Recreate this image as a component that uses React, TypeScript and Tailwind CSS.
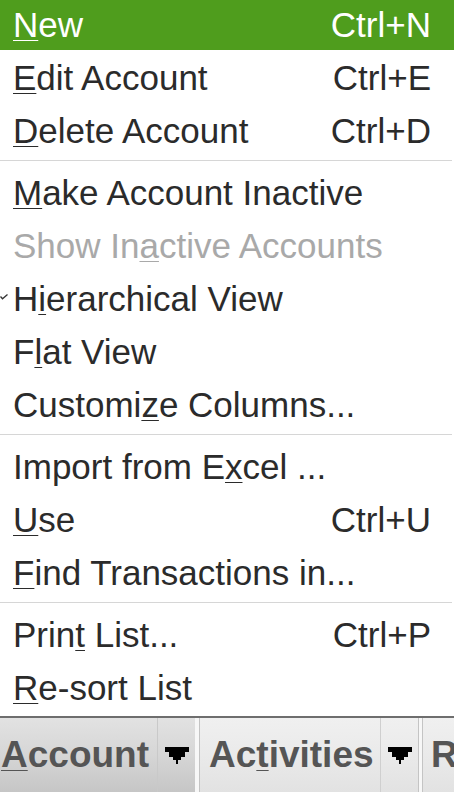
import type { ReactNode } from "react";

type Item =
  | { sep: true }
  | {
      sep?: false;
      before: string;
      key: string;
      after: string;
      shortcut?: string;
      active?: boolean;
      disabled?: boolean;
      checked?: boolean;
    };

const items: Item[] = [
  { before: "", key: "N", after: "ew", shortcut: "Ctrl+N", active: true },
  { before: "", key: "E", after: "dit Account", shortcut: "Ctrl+E" },
  { before: "", key: "D", after: "elete Account", shortcut: "Ctrl+D" },
  { sep: true },
  { before: "", key: "M", after: "ake Account Inactive" },
  { before: "Show In", key: "a", after: "ctive Accounts", disabled: true },
  { before: "H", key: "i", after: "erarchical View", checked: true },
  { before: "F", key: "l", after: "at View" },
  { before: "Customi", key: "z", after: "e Columns..." },
  { sep: true },
  { before: "Import from E", key: "x", after: "cel ..." },
  { before: "", key: "U", after: "se", shortcut: "Ctrl+U" },
  { before: "", key: "F", after: "ind Transactions in..." },
  { sep: true },
  { before: "Prin", key: "t", after: " List...", shortcut: "Ctrl+P" },
  { before: "", key: "R", after: "e-sort List" },
];

function Check() {
  return (
    <svg width="8" height="6" viewBox="0 0 8 6" className="absolute left-0 top-[23px]">
      <path d="M0.5 2.5 L2.5 4.8 L7.5 0.5" fill="none" stroke="#333" strokeWidth="1.3" />
    </svg>
  );
}

function Arrow() {
  return (
    <svg width="24" height="17" viewBox="0 0 24 17" shapeRendering="crispEdges">
      <path d="M0 0 H24 V5 H20 V10 H16 V13 H13 V17 H11 V13 H8 V10 H4 V5 H0 Z" fill="#000" />
    </svg>
  );
}

function Tab({ children, dark, width }: { children: ReactNode; dark?: boolean; width: string }) {
  return (
    <div
      className={`flex h-full shrink-0 items-stretch ${width} ${
        dark
          ? "bg-gradient-to-b from-[#e2e2e2] via-[#d6d6d6] to-[#c6c6c6]"
          : "bg-gradient-to-b from-[#f0f0f0] via-[#eaeaea] to-[#e2e2e2]"
      }`}
    >
      {children}
    </div>
  );
}

export default function App() {
  return (
    <div
      className="h-[792px] w-[454px] overflow-hidden bg-white text-[#2b2b2b]"
      style={{ fontFamily: '"Liberation Sans", Arial, sans-serif' }}
    >
      <div className="-mt-[3px] border-b-2 border-[#6e6e6e] pb-[3px]">
        {items.map((item, i) =>
          item.sep ? (
            <div key={i} className="flex h-[9px] items-center pr-[2px]">
              <div className="h-px w-full bg-[#d6d6d6]" />
            </div>
          ) : (
            <div
              key={i}
              className={`relative flex h-[53px] items-center justify-between pl-[13px] pr-[23px] pt-[3px] text-[35px] ${
                item.active ? "bg-[#4f9d1d] text-white" : ""
              } ${item.disabled ? "text-[#a9a9a9]" : ""}`}
            >
              {item.checked && <Check />}
              <span className="whitespace-pre">
                {item.before}
                <span className="underline decoration-1 underline-offset-[3px]">{item.key}</span>
                {item.after}
              </span>
              {item.shortcut && <span>{item.shortcut}</span>}
            </div>
          )
        )}
      </div>

      <div className="flex h-[74px] items-stretch bg-[#f4f4f4] text-[37px] font-bold text-[#555555]">
        <Tab dark width="w-[195px]">
          <div className="flex w-[158px] items-center border-r border-[#c9c9c9] pl-[1px]">
            <span>
              <span className="underline decoration-1 underline-offset-[3px]">A</span>ccount
            </span>
          </div>
          <div className="flex flex-1 items-center justify-center pl-[1px]">
            <Arrow />
          </div>
        </Tab>
        <div className="w-[5px] shrink-0 border-r border-[#c4c4c4] bg-[#f7f7f7]" />
        <Tab width="w-[219px]">
          <div className="flex w-[181px] items-center border-r border-[#cfcfcf] pl-[9px]">
            <span>
              Ac<span className="underline decoration-1 underline-offset-[3px]">t</span>ivities
            </span>
          </div>
          <div className="flex flex-1 items-center justify-center border-r border-[#c4c4c4]">
            <Arrow />
          </div>
        </Tab>
        <div className="w-[4px] shrink-0 border-r border-[#c4c4c4] bg-[#f7f7f7]" />
        <Tab width="w-[40px]">
          <div className="flex items-center pl-[8px]">R</div>
        </Tab>
      </div>
    </div>
  );
}
